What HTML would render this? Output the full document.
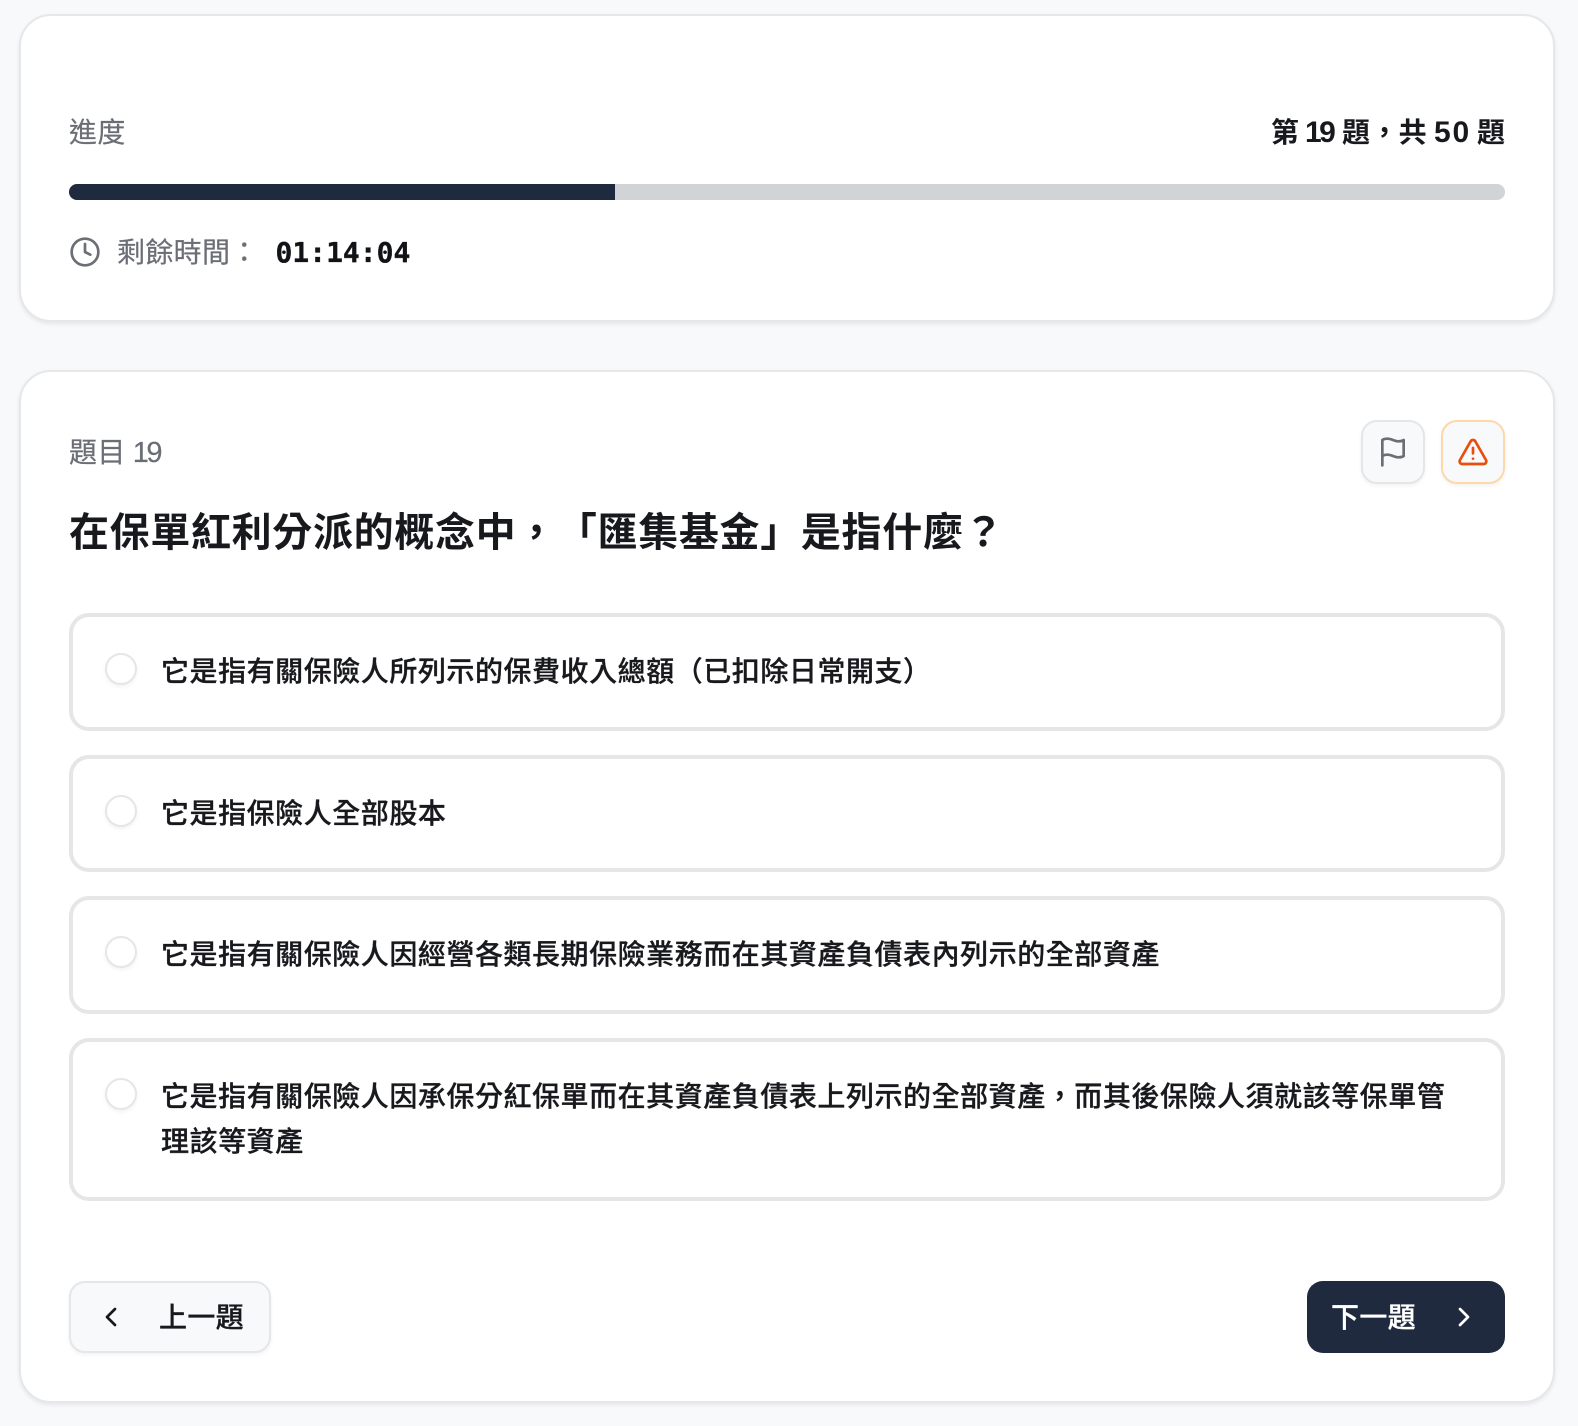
<!DOCTYPE html>
<html lang="zh-Hant"><head><meta charset="utf-8"><title>題目</title>
<style>
*{box-sizing:border-box;margin:0;padding:0}
html,body{width:1578px;height:1426px;overflow:hidden;background:#f8f9fb}
body{position:relative;font-family:"Liberation Sans","Noto Sans CJK TC",sans-serif;color:#18191d;letter-spacing:.32px;text-spacing-trim:space-all}
.abs,.card,.opt,.radio,.ot,.btn{position:absolute}
.card{left:19px;width:1536px;background:#fff;border:2px solid #e6e7e9;border-radius:32px;box-shadow:0 2px 4px rgba(0,0,0,.08)}
.opt{left:69px;width:1436px;background:#fff;border:4px solid #e5e6e8;border-radius:20px}
.radio{left:105px;width:32px;height:32px;border-radius:50%;background:#fff;border:2px solid #e5e6e8;box-shadow:0 2px 4px rgba(0,0,0,.05)}
.ot{left:161px;width:1320px;font-size:28px;line-height:45.5px;font-weight:500;letter-spacing:.54px;color:#18191d;-webkit-text-stroke:.3px #18191d}
.t{position:absolute;white-space:nowrap;line-height:40px}
.b{font-size:28px;font-weight:700;top:113px;color:#18191d}
.g{color:#6b6e75;-webkit-text-stroke:.2px #6b6e75}
.btn{display:block;border-radius:16px}
svg{position:absolute;fill:none;stroke-linecap:round;stroke-linejoin:round;stroke-width:2}
</style></head><body>
<div class="card" style="top:14px;height:308px"></div>
<div class="t g" style="left:69px;top:113px;font-size:28px">進度</div>
<div class="t b" style="left:1271px">第</div>
<div class="t b" style="left:1305px;font-size:30px;letter-spacing:-2.5px">19</div>
<div class="t b" style="left:1342px">題，共</div>
<div class="t b" style="left:1434px;font-size:30px;letter-spacing:1.8px">50</div>
<div class="t b" style="left:1477px">題</div>
<div class="abs" style="left:69px;top:184px;width:1436px;height:16px;background:#d2d3d6;border-radius:8px;overflow:hidden"><div style="width:546px;height:16px;background:#202a3f"></div></div>
<svg style="left:69px;top:236px" width="32" height="32" viewBox="0 0 24 24" stroke="#6b6e75"><circle cx="12" cy="12" r="10"/><path d="M12 6v6l4 2"/></svg>
<div class="t g" style="left:117px;top:233px;font-size:28px">剩餘時間：</div>
<div class="t" style="left:275.5px;top:233px;font-size:28px;font-weight:700;letter-spacing:0;font-family:'DejaVu Sans Mono','Liberation Mono',monospace;color:#111317;-webkit-text-stroke:.3px #111317">01:14:04</div>

<div class="card" style="top:370px;height:1033px"></div>
<div class="t g" style="left:69px;top:433px;font-size:28px">題目 <span style="font-size:29px;letter-spacing:-2.5px;margin-left:-1px">19</span></div>
<div class="btn" style="left:1361px;top:420px;width:64px;height:64px;background:#f8f9fb;border:2px solid #e5e6e8;box-shadow:0 2px 4px rgba(0,0,0,.05)"></div>
<svg style="left:1377px;top:436px" width="32" height="32" viewBox="0 0 24 24" stroke="#6b6e75"><path d="M4 15s1-1 4-1 5 2 8 2 4-1 4-1V3s-1 1-4 1-5-2-8-2-4 1-4 1z"/><path d="M4 22v-7"/></svg>
<div class="btn" style="left:1441px;top:420px;width:64px;height:64px;background:#f8f9fb;border:2px solid #fed7aa;box-shadow:0 2px 4px rgba(0,0,0,.05)"></div>
<svg style="left:1457px;top:436px" width="32" height="32" viewBox="0 0 24 24" stroke="#ea4d0c"><path d="m21.73 18-8-14a2 2 0 0 0-3.48 0l-8 14A2 2 0 0 0 4 21h16a2 2 0 0 0 1.73-3"/><path d="M12 9v4"/><path d="M12 17h.01"/></svg>
<div class="t" style="left:69px;top:503px;font-size:40px;line-height:60px;font-weight:700;letter-spacing:.66px;color:#18191d">在保單紅利分派的概念中，「匯集基金」是指什麼？</div>

<div class="opt" style="top:613px;height:117.5px"></div><div class="radio" style="top:653px"></div>
<div class="ot" style="top:649px">它是指有關保險人所列示的保費收入總額（已扣除日常開支）</div>
<div class="opt" style="top:754.5px;height:117.5px"></div><div class="radio" style="top:794.5px"></div>
<div class="ot" style="top:790.5px">它是指保險人全部股本</div>
<div class="opt" style="top:896px;height:117.5px"></div><div class="radio" style="top:936px"></div>
<div class="ot" style="top:932px">它是指有關保險人因經營各類長期保險業務而在其資產負債表內列示的全部資產</div>
<div class="opt" style="top:1037.5px;height:163px"></div><div class="radio" style="top:1077.5px"></div>
<div class="ot" style="top:1073.5px">它是指有關保險人因承保分紅保單而在其資產負債表上列示的全部資產，而其後保險人須就該等保單管<br>理該等資產</div>

<div class="btn" style="left:69px;top:1281px;width:202px;height:72px;background:#f8f9fb;border:2px solid #e5e6e8;box-shadow:0 2px 4px rgba(0,0,0,.05)"></div>
<svg style="left:95px;top:1301px" width="32" height="32" viewBox="0 0 24 24" stroke="#18191d"><path d="m15 18-6-6 6-6"/></svg>
<div class="t" style="left:159px;top:1298px;font-size:28px;font-weight:500;color:#18191d;-webkit-text-stroke:.3px #18191d">上一題</div>
<div class="btn" style="left:1307px;top:1281px;width:198px;height:72px;background:#202a3f"></div>
<div class="t" style="left:1331px;top:1298px;font-size:28px;font-weight:500;color:#fff;-webkit-text-stroke:.3px #fff">下一題</div>
<svg style="left:1448px;top:1301px" width="32" height="32" viewBox="0 0 24 24" stroke="#fff"><path d="m9 18 6-6-6-6"/></svg>
</body></html>
